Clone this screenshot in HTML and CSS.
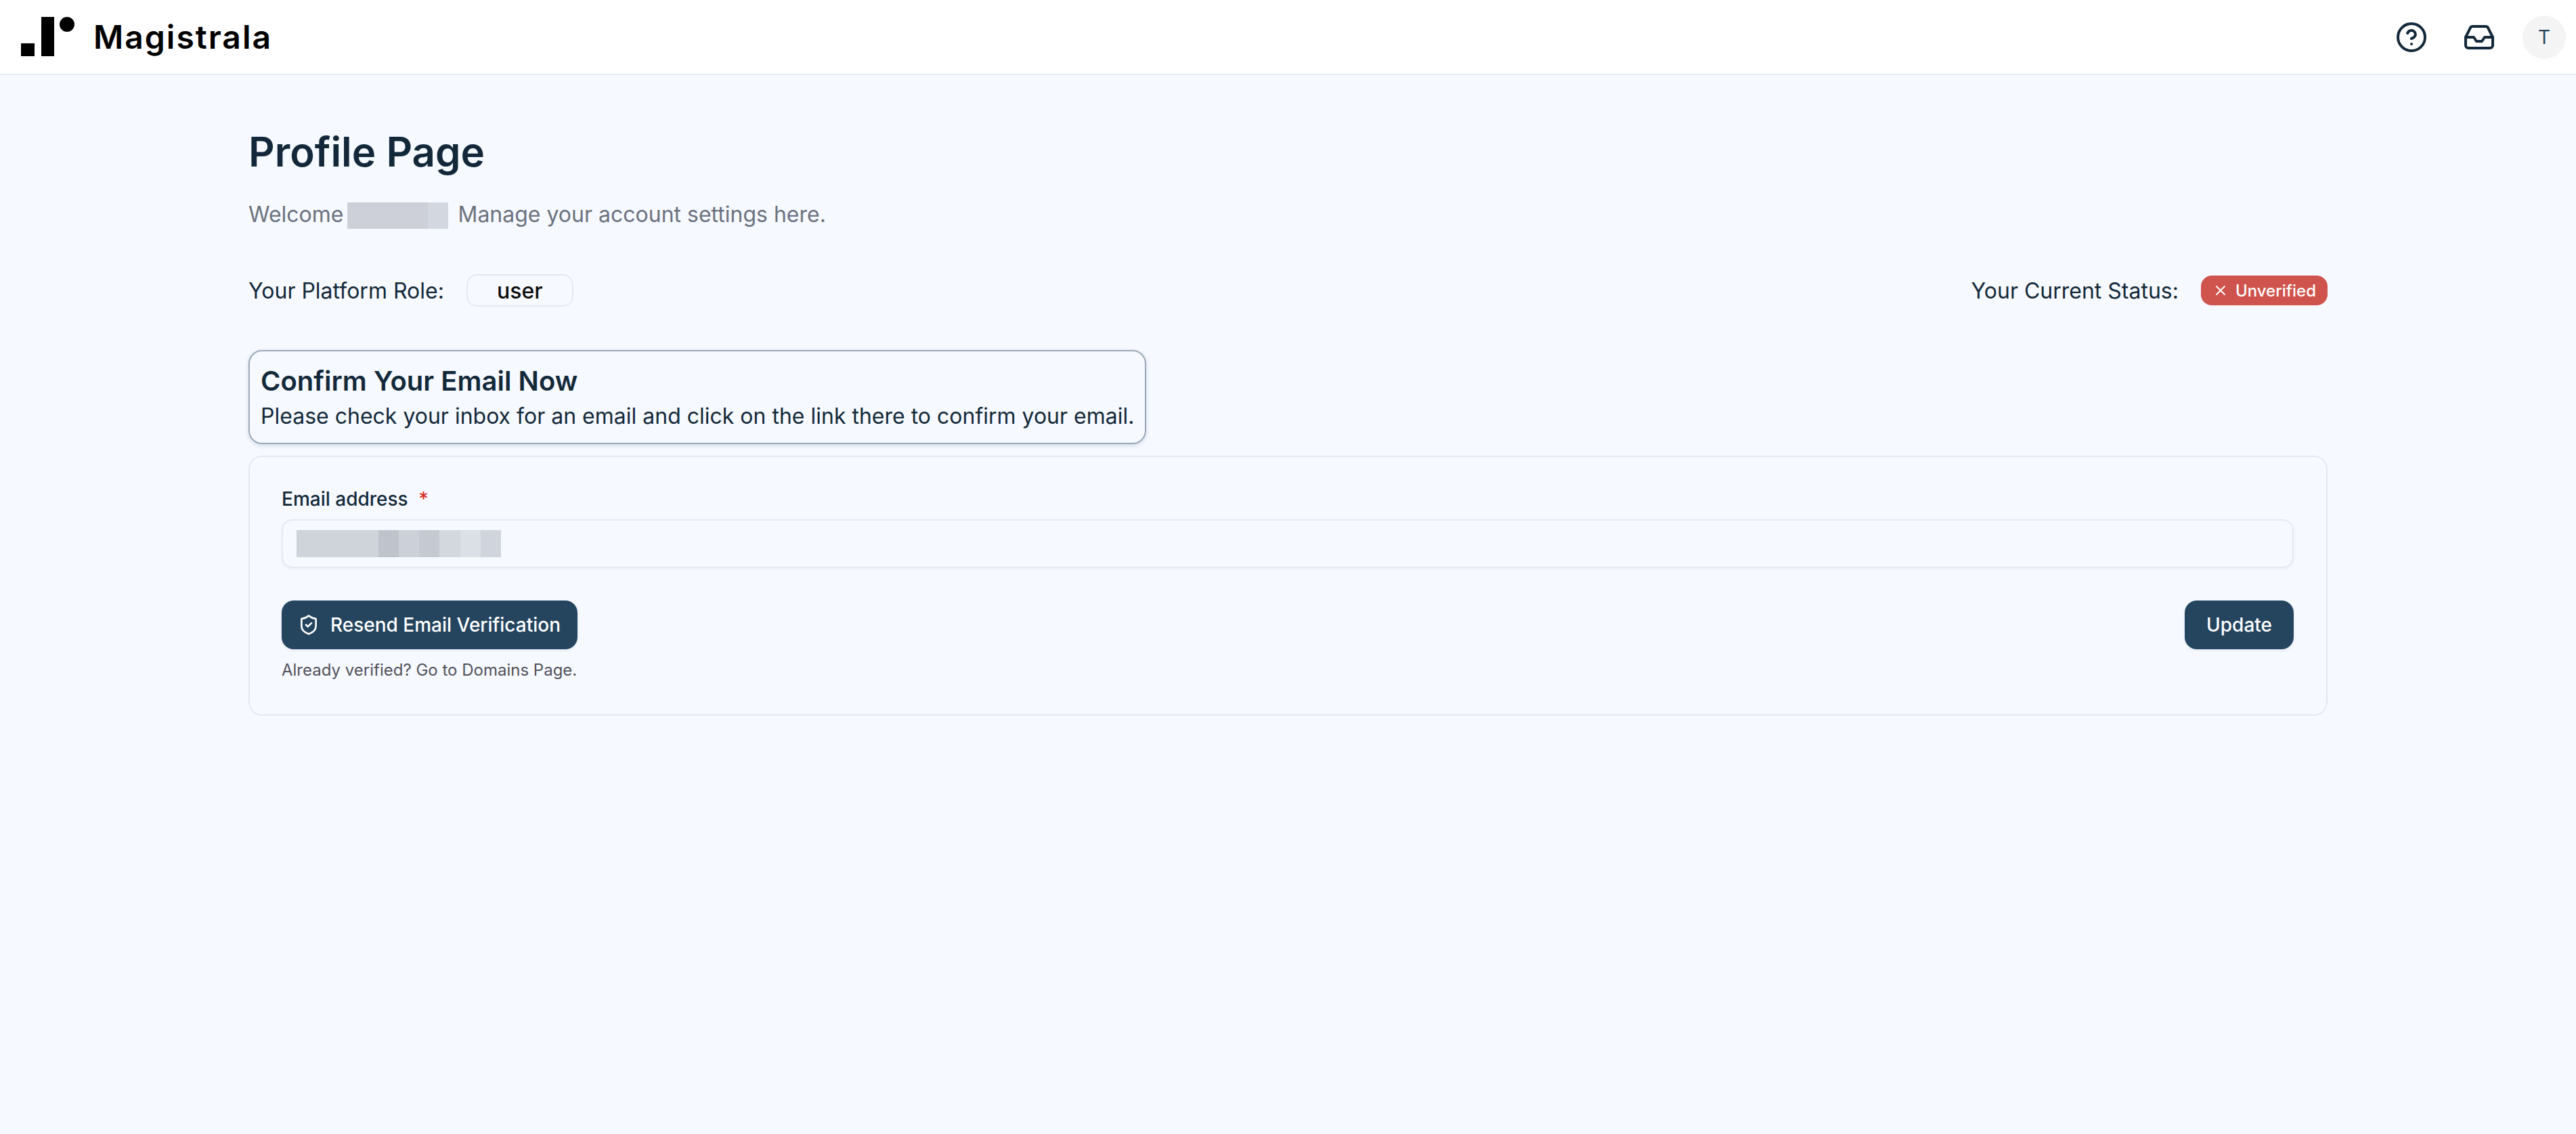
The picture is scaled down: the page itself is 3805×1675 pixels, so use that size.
FILE: index.html
```html
<!DOCTYPE html>
<html lang="en">
<head>
    <meta charset="UTF-8">
    <meta name="viewport" content="width=device-width, initial-scale=1.0">
    <title>Profile Page</title>
    <link rel="stylesheet" href="styles.css">
</head>
<body>
    <header class="topbar">
        <div class="brand">
            <svg class="brandMark" width="80" height="58" viewBox="0 0 80 58">
                <rect x="0" y="39" width="20" height="19"></rect>
                <rect x="30" y="0" width="19" height="58"></rect>
                <circle cx="68" cy="11" r="11"></circle>
            </svg>
            <span class="brandName">Magistrala</span>
        </div>
        <div class="topActions">
            <svg class="topIcon" viewBox="0 0 24 24"><circle cx="12" cy="12" r="10"></circle><path d="M9.09 9a3 3 0 0 1 5.83 1c0 2-3 3-3 3"></path><path d="M12 17h.01"></path></svg>
            <svg class="topIcon" viewBox="0 0 24 24"><polyline points="22 12 16 12 14 15 10 15 8 12 2 12"></polyline><path d="M5.45 5.11 2 12v6a2 2 0 0 0 2 2h16a2 2 0 0 0 2-2v-6l-3.45-6.89A2 2 0 0 0 16.76 4H7.24a2 2 0 0 0-1.79 1.11z"></path></svg>
            <div class="avatar">T</div>
        </div>
    </header>

    <main class="page">
        <h1>Profile Page</h1>
        <div class="welcome">
            <span>Welcome</span>
            <span class="blurName"></span>
            <span>Manage your account settings here.</span>
        </div>

        <div class="statusRow">
            <div class="statusItem">
                <span>Your Platform Role:</span>
                <span class="roleChip">user</span>
            </div>
            <div class="statusItem">
                <span>Your Current Status:</span>
                <span class="badge">
                    <svg class="badgeIcon" viewBox="0 0 24 24"><path d="M18 6 6 18"></path><path d="m6 6 12 12"></path></svg>
                    Unverified
                </span>
            </div>
        </div>

        <div class="notice">
            <h3>Confirm Your Email Now</h3>
            <p>Please check your inbox for an email and click on the link there to confirm your email.</p>
        </div>

        <section class="card">
            <label class="fieldLabel">Email address <span class="required">*</span></label>
            <div class="fieldInput"><span class="blurEmail"></span></div>
            <div class="actions">
                <div>
                    <button class="btn">
                        <svg class="btnIcon" viewBox="0 0 24 24"><path d="M20 13c0 5-3.5 7.5-7.66 8.95a1 1 0 0 1-.67-.01C7.5 20.5 4 18 4 13V6a1 1 0 0 1 1-1c2 0 4.5-1.2 6.24-2.72a1.17 1.17 0 0 1 1.52 0C14.51 3.81 17 5 19 5a1 1 0 0 1 1 1z"></path><path d="m9 12 2 2 4-4"></path></svg>
                        Resend Email Verification
                    </button>
                    <p class="hint">Already verified? Go to Domains Page.</p>
                </div>
                <button class="btn btnUpdate">Update</button>
            </div>
        </section>
    </main>
</body>
</html>
```

FILE: styles.css
```css
* {
    box-sizing: border-box;
}
body {
    margin: 0;
    min-height: 1675px;
    background-color: #f6f9ff;
    color: #13293a;
    font-family: Inter, "Liberation Sans", sans-serif;
}
.topbar {
    display: flex;
    justify-content: space-between;
    align-items: center;
    height: 111px;
    padding: 0 15px 0 31px;
    background-color: #fff;
    border-bottom: 2px solid #e5e9f2;
}
.brand {
    display: flex;
    align-items: center;
    gap: 27px;
}
.brandMark {
    display: block;
    margin-top: -2px;
    fill: #000;
}
.brandName {
    color: #000;
    font-size: 48px;
    font-weight: 600;
    letter-spacing: 2px;
    line-height: 58px;
}
.topActions {
    display: flex;
    align-items: center;
    gap: 52px;
}
.topIcon {
    width: 48px;
    height: 48px;
    fill: none;
    stroke: #13293a;
    stroke-width: 2;
    stroke-linecap: round;
    stroke-linejoin: round;
}
.avatar {
    display: flex;
    justify-content: center;
    align-items: center;
    width: 64px;
    height: 64px;
    margin-left: -12px;
    border-radius: 50%;
    background-color: #f4f4f5;
    color: #25455f;
    font-size: 28px;
}
.page {
    padding: 77px 367px 0;
}
h1 {
    margin: 0;
    font-size: 60px;
    font-weight: 600;
    line-height: 72px;
}
.welcome {
    display: flex;
    align-items: center;
    height: 40px;
    margin-top: 36px;
    color: #6b7280;
    font-size: 32px;
}
.blurName {
    width: 149px;
    height: 39px;
    margin: 4px 14px 0 6px;
    background: linear-gradient(90deg, #cdd0d9 80%, #d3d7df 80%);
}
.statusRow {
    display: flex;
    justify-content: space-between;
    align-items: center;
    margin-top: 69px;
    font-size: 32px;
}
.statusItem {
    display: flex;
    align-items: center;
    gap: 33px;
}
.roleChip {
    display: flex;
    justify-content: center;
    align-items: center;
    width: 158px;
    height: 48px;
    border: 2px solid #e5e9f2;
    border-radius: 16px;
    color: #0c0c0c;
    font-weight: 500;
}
.badge {
    display: flex;
    align-items: center;
    gap: 10px;
    height: 44px;
    padding: 0 17px;
    border-radius: 16px;
    background-color: #d0544e;
    color: #fff;
    font-size: 24px;
    font-weight: 500;
}
.badgeIcon {
    width: 24px;
    height: 24px;
    fill: none;
    stroke: #fff;
    stroke-width: 2;
    stroke-linecap: round;
    stroke-linejoin: round;
}
.notice {
    width: fit-content;
    margin-top: 64px;
    padding: 16px 16px 15px;
    border: 2px solid #9aa9b9;
    border-radius: 20px;
    box-shadow: 0 2px 6px rgba(19, 41, 58, 0.15);
}
.notice h3 {
    margin: 0;
    font-size: 40px;
    font-weight: 600;
    line-height: 56px;
}
.notice p {
    margin: 0;
    font-size: 32px;
    line-height: 48px;
}
.card {
    margin-top: 17px;
    padding: 42px 48px 49px 47px;
    border: 2px solid #e5e9f2;
    border-radius: 20px;
}
.fieldLabel {
    display: block;
    font-size: 28px;
    font-weight: 500;
    line-height: 40px;
}
.required {
    margin-left: 8px;
    color: #d92d20;
}
.fieldInput {
    display: flex;
    align-items: center;
    height: 72px;
    margin-top: 10px;
    padding-left: 20px;
    border: 2px solid #e5e9f2;
    border-radius: 16px;
    box-shadow: 0 2px 4px rgba(19, 41, 58, 0.05);
}
.blurEmail {
    width: 302px;
    height: 40px;
    background: linear-gradient(90deg, #cfd3da 40%, #bfc3cb 40%, #bfc3cb 50%, #ccd0d8 50%, #ccd0d8 60%, #c5c9d1 60%, #c5c9d1 70%, #d3d8df 70%, #d3d8df 80%, #dbdfe6 80%, #dbdfe6 90%, #d0d4dc 90%);
}
.actions {
    display: flex;
    justify-content: space-between;
    align-items: flex-start;
    margin-top: 48px;
}
.btn {
    display: flex;
    align-items: center;
    gap: 16px;
    height: 72px;
    padding: 0 25px 0 24px;
    border: 0;
    border-radius: 18px;
    background-color: #25455f;
    box-shadow: 0 2px 4px rgba(19, 41, 58, 0.08);
    color: #fff;
    font-family: inherit;
    font-size: 28px;
    font-weight: 500;
}
.btnUpdate {
    padding: 0 32px;
}
.btnIcon {
    width: 32px;
    height: 32px;
    fill: none;
    stroke: #fff;
    stroke-width: 2;
    stroke-linecap: round;
    stroke-linejoin: round;
}
.hint {
    margin: 15px 0 0;
    color: #52525b;
    font-size: 24px;
    line-height: 32px;
}
```
